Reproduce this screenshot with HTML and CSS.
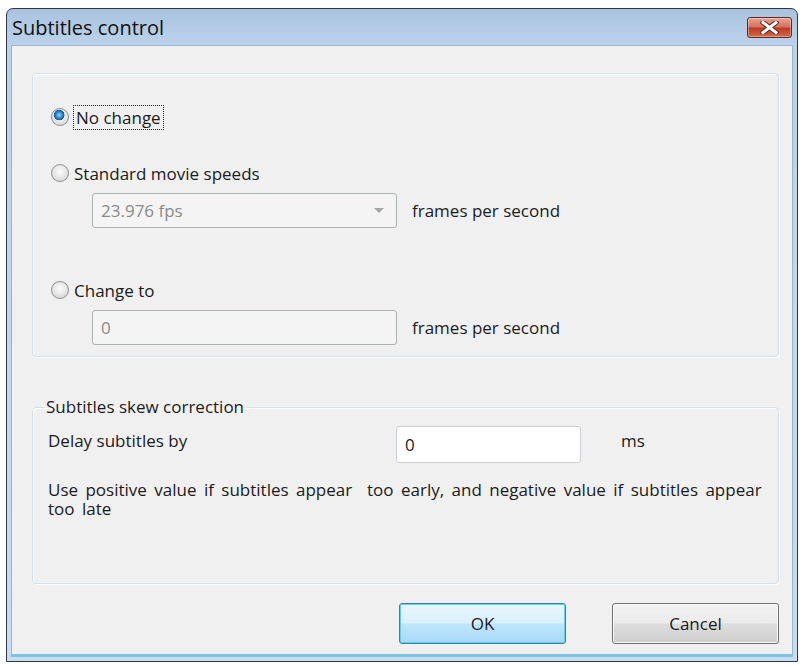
FILE: index.html
```html
<!DOCTYPE html>
<html lang="en">
<head>
    <meta charset="UTF-8">
    <title>Subtitles control</title>
    <link rel="stylesheet" href="styles.css">
</head>
<body>

    <div class="window">
        <div class="titlebar">
            <span class="title">Subtitles control</span>
            <a href="#" class="close-btn">
                <svg width="19" height="13" viewBox="0 0 19 13">
                    <path d="M3 1.5 L16 11.5 M16 1.5 L3 11.5" stroke="#5a2a22" stroke-width="5" stroke-linecap="square"/>
                    <path d="M3 1.5 L16 11.5 M16 1.5 L3 11.5" stroke="#fff" stroke-width="3" stroke-linecap="square"/>
                </svg>
            </a>
        </div>

        <div class="client">
            <div class="group speed-group">
                <label class="radio-row first">
                    <span class="radio checked"></span>
                    <span class="focus">No change</span>
                </label>

                <label class="radio-row">
                    <span class="radio"></span>
                    <span>Standard movie speeds</span>
                </label>
                <div class="field-row">
                    <div class="combo disabled">
                        <span>23.976 fps</span>
                        <span class="arrow"></span>
                    </div>
                    <span class="unit">frames per second</span>
                </div>

                <label class="radio-row change">
                    <span class="radio"></span>
                    <span>Change to</span>
                </label>
                <div class="field-row">
                    <div class="textbox disabled">0</div>
                    <span class="unit">frames per second</span>
                </div>
            </div>

            <fieldset class="group skew-group">
                <legend>Subtitles skew correction</legend>
                <div class="delay-row">
                    <span class="delay-label">Delay subtitles by</span>
                    <div class="textbox delay">0</div>
                    <span class="ms">ms</span>
                </div>
                <p class="hint">Use positive value if subtitles appear &nbsp;too early, and negative value if subtitles appear too late</p>
            </fieldset>

            <div class="buttons">
                <a href="#" class="btn default">OK</a>
                <a href="#" class="btn">Cancel</a>
            </div>
        </div>
    </div>

</body>
</html>
```

FILE: styles.css
```css
* {
    margin: 0;
    padding: 0;
    box-sizing: border-box;
}

body {
    font-family: 'Open Sans', 'Noto Sans', sans-serif;
    font-size: 17px;
    color: #1b1b1b;
    background-color: #fff;
}

.window {
    margin: 8px 0 0 6px;
    width: 792px;
    height: 654px;
    border: 1px solid #2f3a45;
    border-radius: 7px 7px 0 0;
    background: linear-gradient(to bottom, #a9c3df 0, #bcd2ea 36px, #c9dcef 100%);
    display: flex;
    flex-direction: column;
}

.titlebar {
    height: 36px;
    display: flex;
    align-items: center;
    justify-content: space-between;
    padding: 0 5px 0 5px;
}

.title {
    font-size: 20px;
    color: #111;
}

.close-btn {
    width: 45px;
    height: 21px;
    border: 1px solid #5b2b24;
    border-radius: 3px;
    background: linear-gradient(to bottom, #e9a393 0, #d5735e 45%, #bf3c24 55%, #d26a4e 100%);
    display: flex;
    align-items: center;
    justify-content: center;
    box-shadow: inset 0 0 0 1px rgba(255, 255, 255, 0.35);
}

.client {
    flex: 1;
    margin: 0 4px 4px 4px;
    background-color: #f0f0f0;
    border: 1px solid #9db3c9;
    border-bottom: 3px solid #7cc3e4;
    display: flex;
    flex-direction: column;
    padding: 27px 14px 0 20px;
}

.group {
    border: 1px solid #d5dfe5;
    border-radius: 4px;
    box-shadow: inset 1px 1px 0 #fff, 1px 1px 0 #fff;
    width: 747px;
}

.speed-group {
    height: 284px;
    padding: 0 0 0 18px;
}

.radio-row {
    display: flex;
    align-items: center;
    gap: 5px;
    height: 26px;
    margin-top: 30px;
}

.radio-row.change {
    margin-top: 49px;
}

.radio {
    width: 18px;
    height: 18px;
    border-radius: 50%;
    border: 1px solid #8f8f8f;
    background: radial-gradient(circle at 50% 40%, #fdfdfd 0, #e4e4e4 55%, #cfcfcf 100%);
    flex-shrink: 0;
}

.radio.checked {
    background:
        radial-gradient(circle at 45% 38%, #9ed5f5 0, #2f8fd0 3px, #0d5a9c 5px, transparent 5.5px),
        radial-gradient(circle at 50% 40%, #fdfdfd 0, #e4e4e4 55%, #cfcfcf 100%);
}

.focus {
    outline: 1px dotted #222;
    outline-offset: 0;
    padding: 0 2px;
}

.field-row {
    display: flex;
    align-items: center;
    margin: 7px 0 0 41px;
    gap: 15px;
}

.combo, .textbox {
    width: 305px;
    height: 35px;
    border: 1px solid #adb2b5;
    border-radius: 3px;
    display: flex;
    align-items: center;
    padding-left: 8px;
}

.disabled {
    background-color: #f4f4f4;
    color: #8a8a8a;
}

.combo {
    justify-content: space-between;
    padding-right: 12px;
}

.arrow {
    width: 0;
    height: 0;
    border-left: 5px solid transparent;
    border-right: 5px solid transparent;
    border-top: 5px solid #a6a6a6;
}

.skew-group {
    margin-top: 40px;
    height: 187px;
    padding: 0 0 0 15px;
    min-width: 0;
}

.skew-group legend {
    margin-left: -4px;
    padding: 0 3px 0 2px;
    line-height: 20px;
}

.delay-row {
    display: flex;
    align-items: center;
    margin-top: 9px;
}

.delay-label {
    width: 348px;
    margin-bottom: 8px;
}

.textbox.delay {
    width: 185px;
    height: 37px;
    background-color: #fff;
    border-color: #c9cfd4;
}

.ms {
    margin-left: 40px;
    margin-bottom: 8px;
}

.hint {
    margin-top: 17px;
    width: 720px;
    line-height: 19px;
    word-spacing: 3px;
}

.buttons {
    display: flex;
    justify-content: flex-end;
    gap: 46px;
    margin: 19px 3px 0 0;
    width: 747px;
}

.btn {
    width: 167px;
    height: 41px;
    border: 1px solid #707070;
    border-radius: 3px;
    background: linear-gradient(to bottom, #f2f2f2 0, #ebebeb 48%, #dddddd 52%, #cfcfcf 100%);
    box-shadow: inset 0 0 0 1px #fafafa;
    display: flex;
    align-items: center;
    justify-content: center;
    text-decoration: none;
    color: #1b1b1b;
}

.btn.default {
    border-color: #3c7fb1;
    background: linear-gradient(to bottom, #eaf6fd 0, #d9f0fc 48%, #bee6fd 52%, #a7d9f5 100%);
    box-shadow: inset 0 0 0 1px #5fd0f5;
}
```
